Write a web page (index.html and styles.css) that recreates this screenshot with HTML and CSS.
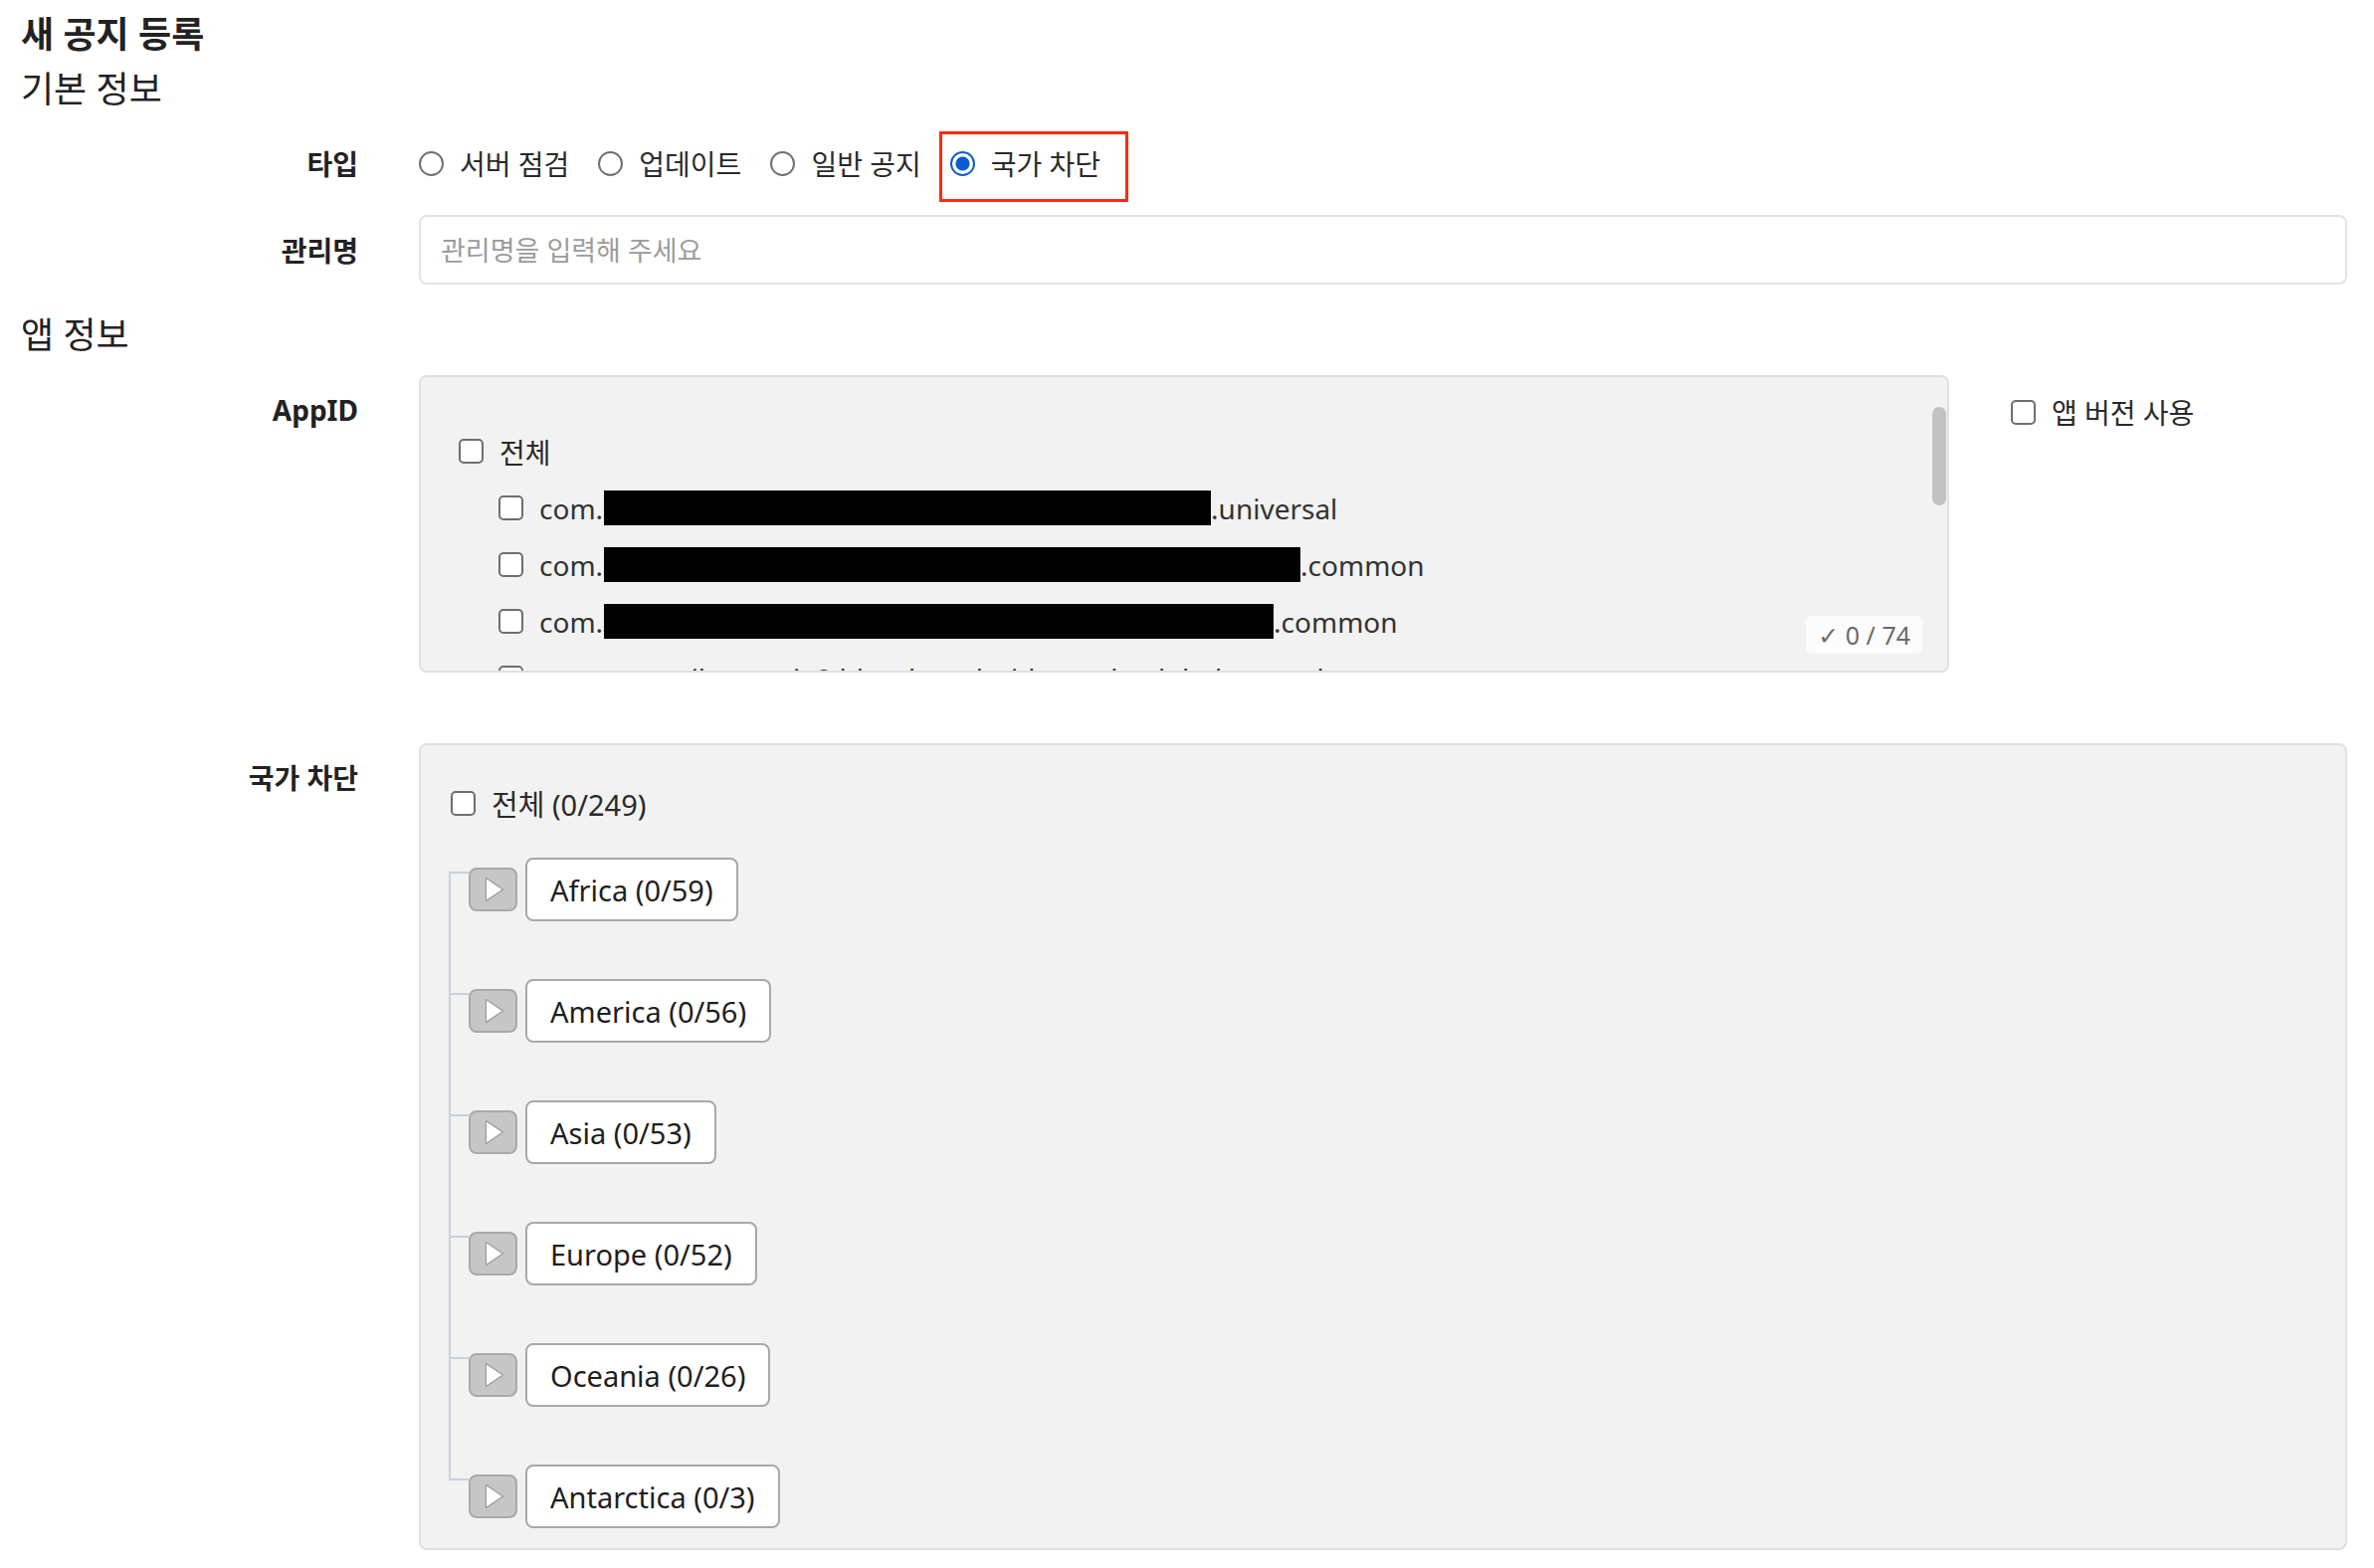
FILE: index.html
```html
<!DOCTYPE html>
<html lang="ko">
<head>
<meta charset="utf-8">
<title>새 공지 등록</title>
<link rel="stylesheet" href="styles.css">
</head>
<body>
<div class="page">
  <h1 class="page-title">새 공지 등록</h1>
  <h2 class="section-title basic-title">기본 정보</h2>

  <div class="form-row row-type">
    <div class="form-label">타입</div>
    <div class="form-field radio-group">
      <label class="radio"><input type="radio" name="type"><span>서버 점검</span></label>
      <label class="radio"><input type="radio" name="type"><span>업데이트</span></label>
      <label class="radio"><input type="radio" name="type"><span>일반 공지</span></label>
      <label class="radio highlighted"><input type="radio" name="type" checked><span>국가 차단</span><span class="highlight-box"></span></label>
    </div>
  </div>

  <div class="form-row row-name">
    <div class="form-label">관리명</div>
    <div class="form-field">
      <input class="text-input" type="text" placeholder="관리명을 입력해 주세요">
    </div>
  </div>

  <h2 class="section-title app-title">앱 정보</h2>

  <div class="form-row row-appid">
    <div class="form-label label-top">AppID</div>
    <div class="form-field appid-field">
      <div class="appid-box">
        <div class="check-list">
          <label class="check app-check"><input type="checkbox"><span>전체</span></label>
          <div class="check-children">
            <label class="check app-check"><input type="checkbox"><span class="app-id">com.<i class="redact redact-1"></i>.universal</span></label>
            <label class="check app-check"><input type="checkbox"><span class="app-id">com.<i class="redact redact-2"></i>.common</span></label>
            <label class="check app-check"><input type="checkbox"><span class="app-id">com.<i class="redact redact-3"></i>.common</span></label>
            <label class="check app-check"><input type="checkbox"><span class="app-id">com.gamevil.zenonia8.bleach.android.google.global.normal</span></label>
            <label class="check app-check"><input type="checkbox"><span class="app-id">com.gamevil.kingdom.android.google.global.normal</span></label>
          </div>
        </div>
        <div class="scroll-thumb"></div>
        <div class="count-badge">✓ 0 / 74</div>
      </div>
      <label class="check version-check"><input type="checkbox"><span>앱 버전 사용</span></label>
    </div>
  </div>

  <div class="form-row row-country">
    <div class="form-label label-top">국가 차단</div>
    <div class="form-field">
      <div class="country-box">
        <label class="check country-all"><input type="checkbox"><span>전체 (0/249)</span></label>
        <ul class="tree">
          <li class="tree-item">
            <span class="tree-toggle"><svg width="20" height="26" viewBox="0 0 20 26"><polygon points="1.5,1.5 18.5,13 1.5,24.5" fill="#ffffff" stroke="#9a9a9a" stroke-width="1.2" stroke-linejoin="round"/></svg></span>
            <span class="tree-node">Africa (0/59)</span>
          </li>
          <li class="tree-item">
            <span class="tree-toggle"><svg width="20" height="26" viewBox="0 0 20 26"><polygon points="1.5,1.5 18.5,13 1.5,24.5" fill="#ffffff" stroke="#9a9a9a" stroke-width="1.2" stroke-linejoin="round"/></svg></span>
            <span class="tree-node">America (0/56)</span>
          </li>
          <li class="tree-item">
            <span class="tree-toggle"><svg width="20" height="26" viewBox="0 0 20 26"><polygon points="1.5,1.5 18.5,13 1.5,24.5" fill="#ffffff" stroke="#9a9a9a" stroke-width="1.2" stroke-linejoin="round"/></svg></span>
            <span class="tree-node">Asia (0/53)</span>
          </li>
          <li class="tree-item">
            <span class="tree-toggle"><svg width="20" height="26" viewBox="0 0 20 26"><polygon points="1.5,1.5 18.5,13 1.5,24.5" fill="#ffffff" stroke="#9a9a9a" stroke-width="1.2" stroke-linejoin="round"/></svg></span>
            <span class="tree-node">Europe (0/52)</span>
          </li>
          <li class="tree-item">
            <span class="tree-toggle"><svg width="20" height="26" viewBox="0 0 20 26"><polygon points="1.5,1.5 18.5,13 1.5,24.5" fill="#ffffff" stroke="#9a9a9a" stroke-width="1.2" stroke-linejoin="round"/></svg></span>
            <span class="tree-node">Oceania (0/26)</span>
          </li>
          <li class="tree-item">
            <span class="tree-toggle"><svg width="20" height="26" viewBox="0 0 20 26"><polygon points="1.5,1.5 18.5,13 1.5,24.5" fill="#ffffff" stroke="#9a9a9a" stroke-width="1.2" stroke-linejoin="round"/></svg></span>
            <span class="tree-node">Antarctica (0/3)</span>
          </li>
        </ul>
      </div>
    </div>
  </div>
</div>
</body>
</html>
```

FILE: styles.css
```css
* { box-sizing: border-box; }

html, body {
  margin: 0;
  padding: 0;
  background: #ffffff;
}

body {
  font-family: "Noto Sans", "Noto Sans CJK KR", sans-serif;
  color: #222222;
}

.page {
  padding: 0 27px 0 21px;
}

.page-title {
  margin: 0;
  padding-top: 13px;
  font-size: 36px;
  line-height: 44px;
  font-weight: 700;
  color: #222;
}

.section-title {
  margin: 0;
  font-size: 36px;
  line-height: 44px;
  font-weight: 400;
  color: #222;
}

.basic-title { margin-top: 11px; }
.app-title { margin-top: 29px; }

.form-row {
  display: grid;
  grid-template-columns: 339px 1fr;
  column-gap: 61px;
}

.form-label {
  text-align: right;
  font-weight: 700;
  font-size: 28px;
  color: #222;
}

.label-top {
  line-height: 40px;
  padding-top: 15px;
}

/* type radio row */
.row-type {
  margin-top: 27px;
  height: 50px;
  align-items: center;
}

.radio-group {
  display: flex;
  align-items: center;
  gap: 29px;
}

.radio {
  position: relative;
  display: flex;
  align-items: center;
  gap: 16px;
  height: 50px;
  font-size: 28px;
  color: #2a2a2a;
}

.radio input {
  appearance: none;
  -webkit-appearance: none;
  margin: 0;
  width: 25px;
  height: 25px;
  border: 2px solid #707070;
  border-radius: 50%;
  background: #fff;
}

.radio input:checked {
  border-color: #0b5cce;
  background: radial-gradient(circle, #0b5cce 0 6.5px, #ffffff 7.5px);
}

.highlight-box {
  position: absolute;
  left: -11px;
  top: -7px;
  width: 190px;
  height: 71px;
  border: 3px solid #ff2a10;
  pointer-events: none;
}

/* name input */
.row-name {
  margin-top: 27px;
  align-items: center;
}

.text-input {
  display: block;
  width: 100%;
  height: 70px;
  border: 2px solid #e3e3e3;
  border-radius: 8px;
  padding: 0 20px;
  font-family: "Noto Sans", "Noto Sans CJK KR", sans-serif;
  font-size: 27px;
  color: #222;
  background: #fff;
  outline: none;
}

.text-input::placeholder {
  color: #9b9b9b;
}

/* app id */
.row-appid { margin-top: 18px; }

.appid-field {
  display: flex;
  align-items: flex-start;
}

.appid-box {
  position: relative;
  width: 1538px;
  height: 299px;
  flex: none;
  background: #f2f2f2;
  border: 2px solid #e0e0e0;
  border-radius: 8px;
  overflow: hidden;
}

.check-list {
  padding: 46px 0 0 38px;
}

.check-children {
  padding-left: 40px;
}

.check {
  display: flex;
  align-items: center;
  gap: 16px;
  font-size: 28px;
  color: #2a2a2a;
  white-space: nowrap;
}

.check input {
  appearance: none;
  -webkit-appearance: none;
  margin: 0;
  flex: none;
  width: 25px;
  height: 25px;
  border: 2px solid #6e6e6e;
  border-radius: 5px;
  background: #fff;
}

.app-check {
  height: 57px;
}

.app-id {
  display: flex;
  align-items: center;
  font-size: 28px;
  color: #333;
}

.redact {
  display: inline-block;
  height: 35px;
  background: #000;
  margin-left: 1px;
}

.redact-1 { width: 610px; }
.redact-2 { width: 700px; }
.redact-3 { width: 673px; }

.scroll-thumb {
  position: absolute;
  top: 30px;
  right: 1px;
  width: 14px;
  height: 99px;
  border-radius: 7px;
  background: #c2c2c2;
}

.count-badge {
  position: absolute;
  right: 25px;
  bottom: 17px;
  height: 38px;
  padding: 0 12px;
  border-radius: 6px;
  background: #fcfcfc;
  color: #6a6a6a;
  font-size: 25px;
  line-height: 38px;
  font-family: "Noto Sans", "DejaVu Sans", sans-serif;
}

.version-check {
  margin-left: 62px;
  margin-top: 12px;
  height: 50px;
}

/* country */
.row-country { margin-top: 71px; }

.country-box {
  background: #f2f2f2;
  border: 2px solid #e0e0e0;
  border-radius: 8px;
  padding: 33px 0 20px 30px;
}

.country-all {
  height: 50px;
  font-size: 29px;
}

.tree {
  position: relative;
  list-style: none;
  margin: 30px 0 0 -2px;
  padding: 0;
}

.tree::before {
  content: "";
  position: absolute;
  left: 0;
  top: 14px;
  bottom: 48px;
  width: 2px;
  background: #c9d0da;
}

.tree-item {
  position: relative;
  display: flex;
  align-items: center;
  gap: 8px;
  height: 64px;
  padding-left: 20px;
  margin-bottom: 58px;
}

.tree-item:last-child { margin-bottom: 0; }

.tree-item::before {
  content: "";
  position: absolute;
  left: 0;
  top: 14px;
  width: 20px;
  height: 2px;
  background: #c9d0da;
}

.tree-toggle {
  display: flex;
  align-items: center;
  justify-content: center;
  width: 49px;
  height: 44px;
  background: #c6c6c6;
  border: 2px solid #a9a9a9;
  border-radius: 8px;
}

.tree-toggle svg { display: block; margin-left: 2px; }

.tree-node {
  display: flex;
  align-items: center;
  height: 64px;
  padding: 0 23px;
  background: #fff;
  border: 2px solid #a8a8a8;
  border-radius: 8px;
  font-size: 29px;
  color: #1e1e1e;
}
```
